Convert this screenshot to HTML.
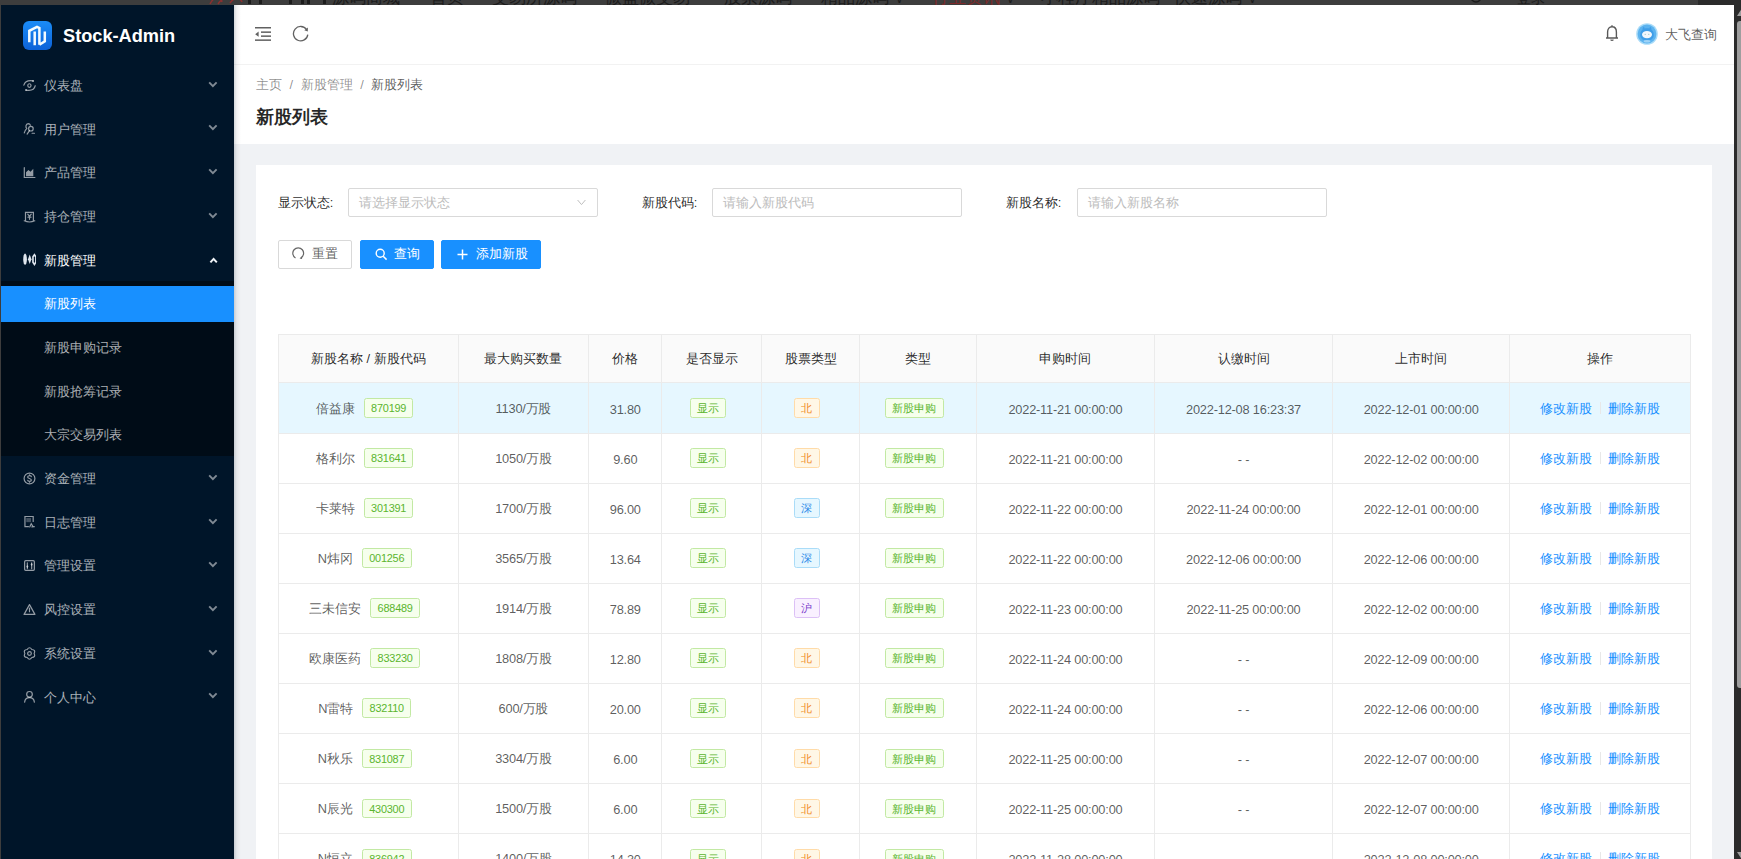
<!DOCTYPE html>
<html><head><meta charset="utf-8">
<style>
*{box-sizing:border-box;margin:0;padding:0}
html,body{width:1741px;height:859px;overflow:hidden;background:#f0f2f5;font-family:"Liberation Sans",sans-serif;font-size:12.8px;color:rgba(0,0,0,.65)}
.abs{position:absolute}
.tb{position:absolute;top:-11.5px;font-size:17px;line-height:17px;color:#1c1c1c;white-space:nowrap}
#topbar{left:0;top:0;width:1741px;height:4.7px;background:#3d3d3d;overflow:hidden;z-index:10}
#ledge{left:0;top:0;width:1.1px;height:859px;background:#3d3d3d;z-index:10}
#scroll{left:1734.2px;top:0;width:6.8px;height:859px;background:#2b2b2b;z-index:10}
#sider{left:0;top:4.7px;width:234px;height:855px;background:#001529;overflow:hidden}
#logo{left:23.2px;top:16.5px;width:28.6px;height:28.6px;border-radius:6px;background:linear-gradient(180deg,#1a8cf7,#0d62d8)}
#logotxt{left:63px;top:9.3px;height:45px;line-height:45px;font-size:18.2px;font-weight:bold;color:#fff}
.mi{position:absolute;left:0;width:234px;height:36.4px;line-height:36.4px;color:rgba(255,255,255,.68);font-size:12.6px;font-weight:500}
.mi svg.ic{display:block}
.mi .tx{position:absolute;left:44.3px;top:0.8px}
.mi .ar{position:absolute;left:208px;top:13.6px}
#sub{left:0;top:276.7px;width:234px;height:174.8px;background:#000c17}
.sel{background:#1890ff;color:#fff}
#header{left:234px;top:4.7px;width:1500.2px;height:59.3px;background:#fff}
#hline{left:234px;top:63.5px;width:1500.2px;height:1px;background:#f2f2f2}
#pghead{left:234px;top:64.5px;width:1500.2px;height:79px;background:#fff}
#shadow{left:234px;top:4.7px;width:7px;height:855px;background:linear-gradient(90deg,rgba(0,21,41,.17),rgba(0,21,41,.05) 40%,rgba(0,21,41,0))}
#card{left:256px;top:165.4px;width:1456px;height:700px;background:#fff}
.lbl{position:absolute;color:rgba(0,0,0,.85);line-height:20px;margin-top:0.6px;font-weight:500}
.inp{position:absolute;width:250px;height:28.6px;border:1px solid #d9d9d9;border-radius:2px;background:#fff}
.ph{position:absolute;left:10px;top:1px;line-height:26.6px;color:#bcbcbc;font-size:12.5px}
.btn{position:absolute;top:239.6px;height:29.3px;border-radius:2px;line-height:25.6px;font-weight:500}
.btnp{background:#1890ff;border:1px solid #1890ff;color:#fff}
.btnd{background:#fff;border:1px solid #d9d9d9;color:rgba(0,0,0,.65)}
.cell{display:flex;align-items:center;justify-content:center;white-space:nowrap}
.tag{display:inline-block;height:19.6px;line-height:19.4px;padding:0 6.2px;border:1px solid;border-radius:2.5px;font-size:10.9px;margin-right:7.3px;font-weight:500}
.nm{margin-right:9px;position:relative;top:1.3px}
.num{letter-spacing:-0.2px;position:relative;top:1.4px}
.tag.num{top:0}
.lnk{color:#1890ff;position:relative;top:1.3px}
.dv{display:inline-block;width:1px;height:12.8px;background:#e8e8e8;margin:0 7.3px}
</style></head><body>
<div id="topbar" class="abs">
  <div class="abs" style="left:1698px;top:0;width:43px;height:5px;background:#2b2b2b"></div>
  <svg class="abs" style="left:208px;top:-6px" width="36" height="11" viewBox="0 0 36 11"><path d="M2 10 C6 2 12 2 14 8 M10 10 C14 4 20 2 24 6 M22 9 C26 3 32 3 34 8" fill="none" stroke="#8a3030" stroke-width="1.5"/></svg>
  <div class="abs" style="left:248px;top:-3px;width:2.5px;height:7px;background:#1c1c1c"></div>
  <div class="abs" style="left:259px;top:-3px;width:2.5px;height:7px;background:#1c1c1c"></div>
  <div class="abs" style="left:289px;top:-3px;width:2.5px;height:7px;background:#1c1c1c"></div>
  <div class="abs" style="left:301px;top:-3px;width:2.5px;height:7px;background:#1c1c1c"></div>
  <div class="abs" style="left:307px;top:-3px;width:2.5px;height:7px;background:#1c1c1c"></div>
  <div class="abs" style="left:323px;top:-3px;width:2.5px;height:7px;background:#1c1c1c"></div>
  <div class="tb" style="left:332px">源码商城</div>
  <div class="tb" style="left:430px">首页</div>
  <div class="tb" style="left:492px">交易所源码</div>
  <div class="tb" style="left:605px">微盘微交易</div>
  <div class="tb" style="left:723.6px">股票源码</div>
  <div class="tb" style="left:821px">精品源码<span style="font-size:12px;margin-left:6px">∨</span></div>
  <div class="tb" style="left:932px;color:#7d2a2a">行业资讯<span style="font-size:12px;margin-left:6px;color:#1c1c1c">∨</span></div>
  <div class="tb" style="left:1041px">小程序精品源码</div>
  <div class="tb" style="left:1173.7px">快速源码<span style="font-size:12px;margin-left:6px">∨</span></div>
  <svg class="abs" style="left:1470px;top:-8px" width="14" height="13" viewBox="0 0 14 13"><circle cx="6" cy="5" r="5" fill="none" stroke="#1c1c1c" stroke-width="1.4"/></svg>
  <div class="tb" style="left:1515.6px;font-size:14.5px;top:-10px">登录</div>
</div>
<div id="ledge" class="abs"></div>
<div id="scroll" class="abs">
  <div class="abs" style="left:2.8px;top:21px;width:4px;height:666.5px;background:#9e9e9e;border-radius:3px 0 0 3px"></div>
  <svg class="abs" style="left:2.5px;top:9px" width="5" height="7"><path d="M0 7 L4.5 0 L4.5 7Z" fill="#9e9e9e"/></svg>
  <svg class="abs" style="left:2.5px;top:852px" width="5" height="7"><path d="M0 0 L4.5 7 L4.5 0Z" fill="#9e9e9e"/></svg>
</div>

<div id="sider" class="abs">
  <div id="logo" class="abs"><svg class="abs" style="left:0;top:0" width="29" height="29" viewBox="0 0 29 29"><path d="M6.3 21.2 V9.8 L14 5.8 L16.4 7 V23.8 M11.7 10.6 V24.2 M16.4 23.8 L21.8 20.3 V10.4" fill="none" stroke="#f4fbff" stroke-width="2.5" stroke-linejoin="miter"/></svg></div>
  <div id="logotxt" class="abs">Stock-Admin</div>
  <div id="sub" class="abs"></div>
<div class="mi" style="top:62.40px"><span style="position:absolute;left:22.5px;top:11.5px"><svg class="ic" width="13" height="13" viewBox="0 0 12 12" style=""><path d="M0.8 5.6 Q2.2 0.6 9.3 1.7" fill="none" stroke="rgba(255,255,255,.58)" stroke-width="1.1" stroke-linecap="round"/><circle cx="9.3" cy="1.8" r=".9" fill="rgba(255,255,255,.58)"/><path d="M11.3 6.2 Q10.2 11.6 2.8 10.3" fill="none" stroke="rgba(255,255,255,.58)" stroke-width="1.1" stroke-linecap="round"/><circle cx="2.8" cy="10.2" r=".9" fill="rgba(255,255,255,.58)"/><ellipse cx="5.9" cy="6.1" rx="1.5" ry="1.7" fill="none" stroke="rgba(255,255,255,.58)" stroke-width="1.1" stroke-linecap="round"/></svg></span><span class="tx">仪表盘</span><svg class="ar" width="10" height="7" viewBox="0 0 10 7"><path d="M1.2 1.4 L4.9 5.2 L8.6 1.4" fill="none" stroke="rgba(255,255,255,.5)" stroke-width="1.9"/></svg></div>
<div class="mi" style="top:106.09px"><span style="position:absolute;left:22.5px;top:11.5px"><svg class="ic" width="13" height="13" viewBox="0 0 12 12" style=""><path d="M1.2 10 C1.8 7.5 3 6.4 3.4 6 C2.2 4.8 2.5 1.6 4.8 1.5 C6 1.5 6.6 2.3 6.8 3" fill="none" stroke="rgba(255,255,255,.58)" stroke-width="1.1" stroke-linecap="round"/><circle cx="7.3" cy="6.2" r="2.1" fill="none" stroke="rgba(255,255,255,.58)" stroke-width="1.1" stroke-linecap="round"/><path d="M6 8 L3.8 11.2 M8.4 10.4 L10.6 10.4" fill="none" stroke="rgba(255,255,255,.58)" stroke-width="1.1" stroke-linecap="round"/></svg></span><span class="tx">用户管理</span><svg class="ar" width="10" height="7" viewBox="0 0 10 7"><path d="M1.2 1.4 L4.9 5.2 L8.6 1.4" fill="none" stroke="rgba(255,255,255,.5)" stroke-width="1.9"/></svg></div>
<div class="mi" style="top:149.78px"><span style="position:absolute;left:22.5px;top:11.5px"><svg class="ic" width="13" height="13" viewBox="0 0 12 12" style=""><path d="M1.2 1.5 V10.6 H11" fill="none" stroke="rgba(255,255,255,.58)" stroke-width="1.1" stroke-linecap="round"/><path d="M2.8 9.5 V5.8 L5 3.6 L7 5.3 L9.5 2.6 V9.5Z" fill="rgba(255,255,255,.58)"/></svg></span><span class="tx">产品管理</span><svg class="ar" width="10" height="7" viewBox="0 0 10 7"><path d="M1.2 1.4 L4.9 5.2 L8.6 1.4" fill="none" stroke="rgba(255,255,255,.5)" stroke-width="1.9"/></svg></div>
<div class="mi" style="top:193.47px"><span style="position:absolute;left:22.5px;top:11.5px"><svg class="ic" width="13" height="13" viewBox="0 0 12 12" style=""><path d="M2.3 9.6 V2.2 H9.6 V9.6 M1.2 10 Q6 12.2 10.8 10" fill="none" stroke="rgba(255,255,255,.58)" stroke-width="1.1" stroke-linecap="round"/><path d="M4.4 3.8 L6 5.8 L7.6 3.8 M6 5.8 V8.6 M4.6 6.6 H7.4" fill="none" stroke="rgba(255,255,255,.58)" stroke-width="1.1" stroke-linecap="round" stroke-width="1"/></svg></span><span class="tx">持仓管理</span><svg class="ar" width="10" height="7" viewBox="0 0 10 7"><path d="M1.2 1.4 L4.9 5.2 L8.6 1.4" fill="none" stroke="rgba(255,255,255,.5)" stroke-width="1.9"/></svg></div>
<div class="mi" style="top:237.16px"><span style="position:absolute;left:22.5px;top:11.5px"><svg class="ic" width="13" height="13" viewBox="0 0 12 12" style=""><ellipse cx="1.9" cy="5.7" rx="1.7" ry="5.2" fill="#dfe6ee"/><path d="M6.2 1.4 L7.8 5.8 L6.2 10.2 L4.6 5.8Z" fill="#dfe6ee"/><path d="M10.55 1.5 L11.9 3.5 V8.5 L10.55 10.6 L9.2 8.5 V3.5Z" fill="none" stroke="#dfe6ee" stroke-width="1.5"/></svg></span><span class="tx" style="color:#fff">新股管理</span><svg class="ar" style="top:15.2px;left:208.5px" width="10" height="7" viewBox="0 0 10 7"><path d="M1.4 5.4 L4.6 1.9 L7.8 5.4" fill="none" stroke="#f0f4f8" stroke-width="2"/></svg></div>
<div class="mi sel" style="top:280.85px"><span class="tx">新股列表</span></div>
<div class="mi" style="top:324.54px"><span class="tx">新股申购记录</span></div>
<div class="mi" style="top:368.23px"><span class="tx">新股抢筹记录</span></div>
<div class="mi" style="top:411.92px"><span class="tx">大宗交易列表</span></div>
<div class="mi" style="top:455.61px"><span style="position:absolute;left:22.5px;top:11.5px"><svg class="ic" width="13" height="13" viewBox="0 0 12 12" style=""><circle cx="6" cy="6" r="5" fill="none" stroke="rgba(255,255,255,.58)" stroke-width="1.1" stroke-linecap="round"/><path d="M7.7 4.3 C7.3 3.1 4.3 3.1 4.3 4.6 C4.3 6.2 7.7 5.7 7.7 7.4 C7.7 9 4.6 9 4.3 7.6 M6 2.6 V3.4 M6 8.6 V9.4" fill="none" stroke="rgba(255,255,255,.58)" stroke-width="1.1" stroke-linecap="round" stroke-width="1"/></svg></span><span class="tx">资金管理</span><svg class="ar" width="10" height="7" viewBox="0 0 10 7"><path d="M1.2 1.4 L4.9 5.2 L8.6 1.4" fill="none" stroke="rgba(255,255,255,.5)" stroke-width="1.9"/></svg></div>
<div class="mi" style="top:499.30px"><span style="position:absolute;left:22.5px;top:11.5px"><svg class="ic" width="13" height="13" viewBox="0 0 12 12" style=""><path d="M5 10.8 H1.8 V1.4 H9.4 V6" fill="none" stroke="rgba(255,255,255,.58)" stroke-width="1.1" stroke-linecap="round"/><rect x="3" y="2.8" width="4.4" height="3.8" fill="rgba(255,255,255,.58)" opacity=".45"/><path d="M6.2 11 L7.6 8 L9.2 10.6 M8.2 11 L10.4 10.8" fill="none" stroke="rgba(255,255,255,.58)" stroke-width="1.1" stroke-linecap="round"/></svg></span><span class="tx">日志管理</span><svg class="ar" width="10" height="7" viewBox="0 0 10 7"><path d="M1.2 1.4 L4.9 5.2 L8.6 1.4" fill="none" stroke="rgba(255,255,255,.5)" stroke-width="1.9"/></svg></div>
<div class="mi" style="top:542.99px"><span style="position:absolute;left:22.5px;top:11.5px"><svg class="ic" width="13" height="13" viewBox="0 0 12 12" style=""><rect x="1.5" y="1.5" width="9" height="9" rx="1" fill="none" stroke="rgba(255,255,255,.58)" stroke-width="1.1" stroke-linecap="round"/><path d="M4 3.5 V9 M8 3.5 V9" fill="none" stroke="rgba(255,255,255,.58)" stroke-width="1.1" stroke-linecap="round" stroke-width=".9"/><path d="M4 5.5 L5 7 L4 8.5 L3 7Z M8 3.6 L9 5 L8 6.4 L7 5Z" fill="rgba(255,255,255,.58)"/></svg></span><span class="tx">管理设置</span><svg class="ar" width="10" height="7" viewBox="0 0 10 7"><path d="M1.2 1.4 L4.9 5.2 L8.6 1.4" fill="none" stroke="rgba(255,255,255,.5)" stroke-width="1.9"/></svg></div>
<div class="mi" style="top:586.68px"><span style="position:absolute;left:22.5px;top:11.5px"><svg class="ic" width="13" height="13" viewBox="0 0 12 12" style=""><path d="M6 1.5 L11 10.5 H1Z" fill="none" stroke="rgba(255,255,255,.58)" stroke-width="1.1" stroke-linejoin="round"/><path d="M6 4.8 V8" fill="none" stroke="rgba(255,255,255,.58)" stroke-width="1.1" stroke-linecap="round"/></svg></span><span class="tx">风控设置</span><svg class="ar" width="10" height="7" viewBox="0 0 10 7"><path d="M1.2 1.4 L4.9 5.2 L8.6 1.4" fill="none" stroke="rgba(255,255,255,.5)" stroke-width="1.9"/></svg></div>
<div class="mi" style="top:630.37px"><span style="position:absolute;left:22.5px;top:11.5px"><svg class="ic" width="13" height="13" viewBox="0 0 12 12" style=""><path d="M3.85 2.28 Q6.00 -0.90 8.15 2.28 Q11.98 2.55 10.30 6.00 Q11.98 9.45 8.15 9.72 Q6.00 12.90 3.85 9.72 Q0.02 9.45 1.70 6.00 Q0.02 2.55 3.85 2.28 Z" fill="none" stroke="rgba(255,255,255,.58)" stroke-width="1.1" stroke-linejoin="round"/><circle cx="6" cy="6" r="1.7" fill="none" stroke="rgba(255,255,255,.58)" stroke-width="1.1" stroke-linecap="round"/></svg></span><span class="tx">系统设置</span><svg class="ar" width="10" height="7" viewBox="0 0 10 7"><path d="M1.2 1.4 L4.9 5.2 L8.6 1.4" fill="none" stroke="rgba(255,255,255,.5)" stroke-width="1.9"/></svg></div>
<div class="mi" style="top:674.06px"><span style="position:absolute;left:22.5px;top:11.5px"><svg class="ic" width="13" height="13" viewBox="0 0 12 12" style=""><circle cx="6" cy="4" r="2.6" fill="none" stroke="rgba(255,255,255,.58)" stroke-width="1.1" stroke-linecap="round"/><path d="M1.5 11.2 C1.8 8.3 3.8 7 6 7 C8.2 7 10.2 8.3 10.5 11.2" fill="none" stroke="rgba(255,255,255,.58)" stroke-width="1.1" stroke-linecap="round"/></svg></span><span class="tx">个人中心</span><svg class="ar" width="10" height="7" viewBox="0 0 10 7"><path d="M1.2 1.4 L4.9 5.2 L8.6 1.4" fill="none" stroke="rgba(255,255,255,.5)" stroke-width="1.9"/></svg></div>
</div>
<div id="header" class="abs"></div>
<div id="hline" class="abs"></div>
<div id="pghead" class="abs"></div>
<div id="card" class="abs"></div>
<div id="shadow" class="abs"></div>

<!-- header content -->
<svg class="abs" style="left:254.8px;top:26.9px" width="16" height="14" viewBox="0 0 16 14">
  <rect x="0" y="0" width="16" height="1.5" fill="#616161"/>
  <rect x="6" y="4.4" width="10" height="1.5" fill="#616161"/>
  <rect x="6" y="8.4" width="10" height="1.5" fill="#616161"/>
  <rect x="0" y="12.4" width="16" height="1.5" fill="#616161"/>
  <path d="M0.2 7.2 L3.6 4.6 V9.8Z" fill="#616161"/>
</svg>
<svg class="abs" style="left:292px;top:23.5px" width="18" height="18" viewBox="0 0 18 18">
  <path d="M14.6 5.6 A7.2 7.2 0 1 0 15.8 10.6" fill="none" stroke="#616161" stroke-width="1.3"/>
  <path d="M15.9 3.6 L15.8 7.4 L12.3 6.2Z" fill="#616161"/>
</svg>
<svg class="abs" style="left:1604.5px;top:23.5px" width="14" height="18" viewBox="0 0 14 18">
  <path d="M7 1.2 V2.6 M2.6 13.8 V8 C2.6 4.6 4.4 2.8 7 2.8 C9.6 2.8 11.4 4.6 11.4 8 V13.8 M1 14 H13 M5.6 15.6 Q7 17.2 8.4 15.6" fill="none" stroke="#595959" stroke-width="1.4"/>
</svg>
<svg class="abs" style="left:1636px;top:23px" width="22" height="22" viewBox="0 0 22 22">
  <circle cx="11" cy="11" r="10.8" fill="#a9dbf8"/>
  <circle cx="11" cy="11" r="9.4" fill="#5cb3ef"/>
  <path d="M4.2 12 C4.2 7.4 7 5.2 11 5.2 C15 5.2 17.8 7.4 17.8 12 C17.8 15.6 15 17.6 11 17.6 C7 17.6 4.2 15.6 4.2 12Z" fill="#3f9ee8"/>
  <path d="M6.2 6.4 L7.6 3.6 L9 5.6Z M15.8 6.4 L14.4 3.6 L13 5.6Z" fill="#3f9ee8"/>
  <ellipse cx="11" cy="11.6" rx="5" ry="3.7" fill="#f1f7fc"/>
  <circle cx="9.2" cy="11.2" r=".5" fill="#7aa"/><circle cx="12.8" cy="11.2" r=".5" fill="#7aa"/>
  <ellipse cx="11" cy="18.2" rx="3.4" ry="1.3" fill="#9fd3f6"/>
</svg>
<div class="abs" style="left:1664.5px;top:24.8px;line-height:20px;color:rgba(0,0,0,.65)">大飞查询</div>

<!-- breadcrumb -->
<div class="abs" style="left:256px;top:74.8px;line-height:20px;color:rgba(0,0,0,.45)">主页<span style="margin:0 7.4px 0 7.6px">/</span>新股管理<span style="margin:0 7.4px 0 7.6px">/</span><span style="color:rgba(0,0,0,.65)">新股列表</span></div>
<div class="abs" style="left:256px;top:104px;line-height:26px;font-size:18.2px;font-weight:bold;color:rgba(0,0,0,.85)">新股列表</div>

<!-- search form -->
<div class="lbl" style="left:277.8px;top:192.5px">显示状态:</div>
<div class="inp" style="left:347.7px;top:188.2px"><span class="ph">请选择显示状态</span>
  <svg class="abs" style="left:228.5px;top:9.5px" width="9" height="7" viewBox="0 0 9 7"><path d="M0.6 1 L4.5 5.6 L8.4 1" fill="none" stroke="#bfbfbf" stroke-width="1"/></svg>
</div>
<div class="lbl" style="left:641.7px;top:192.5px">新股代码:</div>
<div class="inp" style="left:712px;top:188.2px"><span class="ph">请输入新股代码</span></div>
<div class="lbl" style="left:1005.7px;top:192.5px">新股名称:</div>
<div class="inp" style="left:1076.6px;top:188.2px"><span class="ph">请输入新股名称</span></div>

<div class="btn btnd" style="left:277.8px;width:73.8px">
  <svg class="abs" style="left:13.6px;top:6.5px" width="13" height="13" viewBox="0 0 13 13"><path d="M3.5 10.9 A5.4 5.4 0 1 1 8.9 10.9" fill="none" stroke="#666" stroke-width="1.2"/><path d="M7.6 11.6 L9.9 9.2 L10.1 12Z" fill="#666"/></svg>
  <span class="abs" style="left:33.5px;top:0">重置</span>
</div>
<div class="btn btnp" style="left:359.5px;width:74.5px">
  <svg class="abs" style="left:14.2px;top:7.8px" width="13" height="13" viewBox="0 0 13 13"><circle cx="5.2" cy="5.2" r="4" fill="none" stroke="#fff" stroke-width="1.4"/><path d="M8.2 8.2 L11.6 11.6" stroke="#fff" stroke-width="1.5"/></svg>
  <span class="abs" style="left:33.5px;top:0">查询</span>
</div>
<div class="btn btnp" style="left:441.3px;width:100.2px">
  <svg class="abs" style="left:15.2px;top:8.4px" width="11" height="11" viewBox="0 0 11 11"><path d="M5.5 0.5 V10.5 M0.5 5.5 H10.5" stroke="#fff" stroke-width="1.5"/></svg>
  <span class="abs" style="left:33.7px;top:0">添加新股</span>
</div>

<div class="abs" style="left:278.3px;top:334.1px;width:1412.3px;height:48.85px;background:#fafafa;border-radius:3px 3px 0 0"></div>
<div class="abs" style="left:278.3px;top:382.95000000000005px;width:1412.3px;height:50.05px;background:#e6f7ff"></div>
<div class="abs" style="left:278.3px;top:333.60px;width:1412.3px;height:1px;background:#ebebeb"></div>
<div class="abs" style="left:278.3px;top:382.45px;width:1412.3px;height:1px;background:#ebebeb"></div>
<div class="abs" style="left:278.3px;top:432.50px;width:1412.3px;height:1px;background:#ebebeb"></div>
<div class="abs" style="left:278.3px;top:482.55px;width:1412.3px;height:1px;background:#ebebeb"></div>
<div class="abs" style="left:278.3px;top:532.60px;width:1412.3px;height:1px;background:#ebebeb"></div>
<div class="abs" style="left:278.3px;top:582.65px;width:1412.3px;height:1px;background:#ebebeb"></div>
<div class="abs" style="left:278.3px;top:632.70px;width:1412.3px;height:1px;background:#ebebeb"></div>
<div class="abs" style="left:278.3px;top:682.75px;width:1412.3px;height:1px;background:#ebebeb"></div>
<div class="abs" style="left:278.3px;top:732.80px;width:1412.3px;height:1px;background:#ebebeb"></div>
<div class="abs" style="left:278.3px;top:782.85px;width:1412.3px;height:1px;background:#ebebeb"></div>
<div class="abs" style="left:278.3px;top:832.90px;width:1412.3px;height:1px;background:#ebebeb"></div>
<div class="abs" style="left:278.3px;top:882.95px;width:1412.3px;height:1px;background:#ebebeb"></div>
<div class="abs" style="left:277.80px;top:334.1px;width:1px;height:525.9px;background:#ebebeb"></div>
<div class="abs" style="left:457.80px;top:334.1px;width:1px;height:525.9px;background:#ebebeb"></div>
<div class="abs" style="left:588.10px;top:334.1px;width:1px;height:525.9px;background:#ebebeb"></div>
<div class="abs" style="left:661.40px;top:334.1px;width:1px;height:525.9px;background:#ebebeb"></div>
<div class="abs" style="left:761.00px;top:334.1px;width:1px;height:525.9px;background:#ebebeb"></div>
<div class="abs" style="left:859.10px;top:334.1px;width:1px;height:525.9px;background:#ebebeb"></div>
<div class="abs" style="left:975.90px;top:334.1px;width:1px;height:525.9px;background:#ebebeb"></div>
<div class="abs" style="left:1154.00px;top:334.1px;width:1px;height:525.9px;background:#ebebeb"></div>
<div class="abs" style="left:1332.00px;top:334.1px;width:1px;height:525.9px;background:#ebebeb"></div>
<div class="abs" style="left:1509.40px;top:334.1px;width:1px;height:525.9px;background:#ebebeb"></div>
<div class="abs" style="left:1690.10px;top:334.1px;width:1px;height:525.9px;background:#ebebeb"></div>
<div class="abs cell" style="left:278.30px;top:334.10px;width:180.00px;height:48.85px;color:rgba(0,0,0,.85);font-weight:500"><span style="position:relative;top:1.4px">新股名称 / 新股代码</span></div>
<div class="abs cell" style="left:458.30px;top:334.10px;width:130.30px;height:48.85px;color:rgba(0,0,0,.85);font-weight:500"><span style="position:relative;top:1.4px">最大购买数量</span></div>
<div class="abs cell" style="left:588.60px;top:334.10px;width:73.30px;height:48.85px;color:rgba(0,0,0,.85);font-weight:500"><span style="position:relative;top:1.4px">价格</span></div>
<div class="abs cell" style="left:661.90px;top:334.10px;width:99.60px;height:48.85px;color:rgba(0,0,0,.85);font-weight:500"><span style="position:relative;top:1.4px">是否显示</span></div>
<div class="abs cell" style="left:761.50px;top:334.10px;width:98.10px;height:48.85px;color:rgba(0,0,0,.85);font-weight:500"><span style="position:relative;top:1.4px">股票类型</span></div>
<div class="abs cell" style="left:859.60px;top:334.10px;width:116.80px;height:48.85px;color:rgba(0,0,0,.85);font-weight:500"><span style="position:relative;top:1.4px">类型</span></div>
<div class="abs cell" style="left:976.40px;top:334.10px;width:178.10px;height:48.85px;color:rgba(0,0,0,.85);font-weight:500"><span style="position:relative;top:1.4px">申购时间</span></div>
<div class="abs cell" style="left:1154.50px;top:334.10px;width:178.00px;height:48.85px;color:rgba(0,0,0,.85);font-weight:500"><span style="position:relative;top:1.4px">认缴时间</span></div>
<div class="abs cell" style="left:1332.50px;top:334.10px;width:177.40px;height:48.85px;color:rgba(0,0,0,.85);font-weight:500"><span style="position:relative;top:1.4px">上市时间</span></div>
<div class="abs cell" style="left:1509.90px;top:334.10px;width:180.70px;height:48.85px;color:rgba(0,0,0,.85);font-weight:500"><span style="position:relative;top:1.4px">操作</span></div>
<div class="abs cell" style="left:278.30px;top:382.95px;width:180.00px;height:50.05px"><span class="nm">倍益康</span><span class="tag num" style="color:#5ab52e;background:#f6ffed;border-color:#c2e9a3">870199</span></div>
<div class="abs cell" style="left:458.30px;top:382.95px;width:130.30px;height:50.05px"><span class="num">1130/万股</span></div>
<div class="abs cell" style="left:588.60px;top:382.95px;width:73.30px;height:50.05px"><span class="num">31.80</span></div>
<div class="abs cell" style="left:661.90px;top:382.95px;width:99.60px;height:50.05px"><span class="tag" style="color:#5ab52e;background:#f6ffed;border-color:#c2e9a3">显示</span></div>
<div class="abs cell" style="left:761.50px;top:382.95px;width:98.10px;height:50.05px"><span class="tag" style="color:#f08a1e;background:#fff7e6;border-color:#ffdba8">北</span></div>
<div class="abs cell" style="left:859.60px;top:382.95px;width:116.80px;height:50.05px"><span class="tag" style="color:#5ab52e;background:#f6ffed;border-color:#c2e9a3">新股申购</span></div>
<div class="abs cell" style="left:976.40px;top:382.95px;width:178.10px;height:50.05px"><span class="num">2022-11-21 00:00:00</span></div>
<div class="abs cell" style="left:1154.50px;top:382.95px;width:178.00px;height:50.05px"><span class="num">2022-12-08 16:23:37</span></div>
<div class="abs cell" style="left:1332.50px;top:382.95px;width:177.40px;height:50.05px"><span class="num">2022-12-01 00:00:00</span></div>
<div class="abs cell" style="left:1509.90px;top:382.95px;width:180.70px;height:50.05px"><span class="lnk">修改新股</span><span class="dv"></span><span class="lnk">删除新股</span></div>
<div class="abs cell" style="left:278.30px;top:433.00px;width:180.00px;height:50.05px"><span class="nm">格利尔</span><span class="tag num" style="color:#5ab52e;background:#f6ffed;border-color:#c2e9a3">831641</span></div>
<div class="abs cell" style="left:458.30px;top:433.00px;width:130.30px;height:50.05px"><span class="num">1050/万股</span></div>
<div class="abs cell" style="left:588.60px;top:433.00px;width:73.30px;height:50.05px"><span class="num">9.60</span></div>
<div class="abs cell" style="left:661.90px;top:433.00px;width:99.60px;height:50.05px"><span class="tag" style="color:#5ab52e;background:#f6ffed;border-color:#c2e9a3">显示</span></div>
<div class="abs cell" style="left:761.50px;top:433.00px;width:98.10px;height:50.05px"><span class="tag" style="color:#f08a1e;background:#fff7e6;border-color:#ffdba8">北</span></div>
<div class="abs cell" style="left:859.60px;top:433.00px;width:116.80px;height:50.05px"><span class="tag" style="color:#5ab52e;background:#f6ffed;border-color:#c2e9a3">新股申购</span></div>
<div class="abs cell" style="left:976.40px;top:433.00px;width:178.10px;height:50.05px"><span class="num">2022-11-21 00:00:00</span></div>
<div class="abs cell" style="left:1154.50px;top:433.00px;width:178.00px;height:50.05px"><span class="num">- -</span></div>
<div class="abs cell" style="left:1332.50px;top:433.00px;width:177.40px;height:50.05px"><span class="num">2022-12-02 00:00:00</span></div>
<div class="abs cell" style="left:1509.90px;top:433.00px;width:180.70px;height:50.05px"><span class="lnk">修改新股</span><span class="dv"></span><span class="lnk">删除新股</span></div>
<div class="abs cell" style="left:278.30px;top:483.05px;width:180.00px;height:50.05px"><span class="nm">卡莱特</span><span class="tag num" style="color:#5ab52e;background:#f6ffed;border-color:#c2e9a3">301391</span></div>
<div class="abs cell" style="left:458.30px;top:483.05px;width:130.30px;height:50.05px"><span class="num">1700/万股</span></div>
<div class="abs cell" style="left:588.60px;top:483.05px;width:73.30px;height:50.05px"><span class="num">96.00</span></div>
<div class="abs cell" style="left:661.90px;top:483.05px;width:99.60px;height:50.05px"><span class="tag" style="color:#5ab52e;background:#f6ffed;border-color:#c2e9a3">显示</span></div>
<div class="abs cell" style="left:761.50px;top:483.05px;width:98.10px;height:50.05px"><span class="tag" style="color:#2a8ae8;background:#e6f7ff;border-color:#aadcf8">深</span></div>
<div class="abs cell" style="left:859.60px;top:483.05px;width:116.80px;height:50.05px"><span class="tag" style="color:#5ab52e;background:#f6ffed;border-color:#c2e9a3">新股申购</span></div>
<div class="abs cell" style="left:976.40px;top:483.05px;width:178.10px;height:50.05px"><span class="num">2022-11-22 00:00:00</span></div>
<div class="abs cell" style="left:1154.50px;top:483.05px;width:178.00px;height:50.05px"><span class="num">2022-11-24 00:00:00</span></div>
<div class="abs cell" style="left:1332.50px;top:483.05px;width:177.40px;height:50.05px"><span class="num">2022-12-01 00:00:00</span></div>
<div class="abs cell" style="left:1509.90px;top:483.05px;width:180.70px;height:50.05px"><span class="lnk">修改新股</span><span class="dv"></span><span class="lnk">删除新股</span></div>
<div class="abs cell" style="left:278.30px;top:533.10px;width:180.00px;height:50.05px"><span class="nm">N炜冈</span><span class="tag num" style="color:#5ab52e;background:#f6ffed;border-color:#c2e9a3">001256</span></div>
<div class="abs cell" style="left:458.30px;top:533.10px;width:130.30px;height:50.05px"><span class="num">3565/万股</span></div>
<div class="abs cell" style="left:588.60px;top:533.10px;width:73.30px;height:50.05px"><span class="num">13.64</span></div>
<div class="abs cell" style="left:661.90px;top:533.10px;width:99.60px;height:50.05px"><span class="tag" style="color:#5ab52e;background:#f6ffed;border-color:#c2e9a3">显示</span></div>
<div class="abs cell" style="left:761.50px;top:533.10px;width:98.10px;height:50.05px"><span class="tag" style="color:#2a8ae8;background:#e6f7ff;border-color:#aadcf8">深</span></div>
<div class="abs cell" style="left:859.60px;top:533.10px;width:116.80px;height:50.05px"><span class="tag" style="color:#5ab52e;background:#f6ffed;border-color:#c2e9a3">新股申购</span></div>
<div class="abs cell" style="left:976.40px;top:533.10px;width:178.10px;height:50.05px"><span class="num">2022-11-22 00:00:00</span></div>
<div class="abs cell" style="left:1154.50px;top:533.10px;width:178.00px;height:50.05px"><span class="num">2022-12-06 00:00:00</span></div>
<div class="abs cell" style="left:1332.50px;top:533.10px;width:177.40px;height:50.05px"><span class="num">2022-12-06 00:00:00</span></div>
<div class="abs cell" style="left:1509.90px;top:533.10px;width:180.70px;height:50.05px"><span class="lnk">修改新股</span><span class="dv"></span><span class="lnk">删除新股</span></div>
<div class="abs cell" style="left:278.30px;top:583.15px;width:180.00px;height:50.05px"><span class="nm">三未信安</span><span class="tag num" style="color:#5ab52e;background:#f6ffed;border-color:#c2e9a3">688489</span></div>
<div class="abs cell" style="left:458.30px;top:583.15px;width:130.30px;height:50.05px"><span class="num">1914/万股</span></div>
<div class="abs cell" style="left:588.60px;top:583.15px;width:73.30px;height:50.05px"><span class="num">78.89</span></div>
<div class="abs cell" style="left:661.90px;top:583.15px;width:99.60px;height:50.05px"><span class="tag" style="color:#5ab52e;background:#f6ffed;border-color:#c2e9a3">显示</span></div>
<div class="abs cell" style="left:761.50px;top:583.15px;width:98.10px;height:50.05px"><span class="tag" style="color:#7a3dcc;background:#f9f0ff;border-color:#dcc0f6">沪</span></div>
<div class="abs cell" style="left:859.60px;top:583.15px;width:116.80px;height:50.05px"><span class="tag" style="color:#5ab52e;background:#f6ffed;border-color:#c2e9a3">新股申购</span></div>
<div class="abs cell" style="left:976.40px;top:583.15px;width:178.10px;height:50.05px"><span class="num">2022-11-23 00:00:00</span></div>
<div class="abs cell" style="left:1154.50px;top:583.15px;width:178.00px;height:50.05px"><span class="num">2022-11-25 00:00:00</span></div>
<div class="abs cell" style="left:1332.50px;top:583.15px;width:177.40px;height:50.05px"><span class="num">2022-12-02 00:00:00</span></div>
<div class="abs cell" style="left:1509.90px;top:583.15px;width:180.70px;height:50.05px"><span class="lnk">修改新股</span><span class="dv"></span><span class="lnk">删除新股</span></div>
<div class="abs cell" style="left:278.30px;top:633.20px;width:180.00px;height:50.05px"><span class="nm">欧康医药</span><span class="tag num" style="color:#5ab52e;background:#f6ffed;border-color:#c2e9a3">833230</span></div>
<div class="abs cell" style="left:458.30px;top:633.20px;width:130.30px;height:50.05px"><span class="num">1808/万股</span></div>
<div class="abs cell" style="left:588.60px;top:633.20px;width:73.30px;height:50.05px"><span class="num">12.80</span></div>
<div class="abs cell" style="left:661.90px;top:633.20px;width:99.60px;height:50.05px"><span class="tag" style="color:#5ab52e;background:#f6ffed;border-color:#c2e9a3">显示</span></div>
<div class="abs cell" style="left:761.50px;top:633.20px;width:98.10px;height:50.05px"><span class="tag" style="color:#f08a1e;background:#fff7e6;border-color:#ffdba8">北</span></div>
<div class="abs cell" style="left:859.60px;top:633.20px;width:116.80px;height:50.05px"><span class="tag" style="color:#5ab52e;background:#f6ffed;border-color:#c2e9a3">新股申购</span></div>
<div class="abs cell" style="left:976.40px;top:633.20px;width:178.10px;height:50.05px"><span class="num">2022-11-24 00:00:00</span></div>
<div class="abs cell" style="left:1154.50px;top:633.20px;width:178.00px;height:50.05px"><span class="num">- -</span></div>
<div class="abs cell" style="left:1332.50px;top:633.20px;width:177.40px;height:50.05px"><span class="num">2022-12-09 00:00:00</span></div>
<div class="abs cell" style="left:1509.90px;top:633.20px;width:180.70px;height:50.05px"><span class="lnk">修改新股</span><span class="dv"></span><span class="lnk">删除新股</span></div>
<div class="abs cell" style="left:278.30px;top:683.25px;width:180.00px;height:50.05px"><span class="nm">N雷特</span><span class="tag num" style="color:#5ab52e;background:#f6ffed;border-color:#c2e9a3">832110</span></div>
<div class="abs cell" style="left:458.30px;top:683.25px;width:130.30px;height:50.05px"><span class="num">600/万股</span></div>
<div class="abs cell" style="left:588.60px;top:683.25px;width:73.30px;height:50.05px"><span class="num">20.00</span></div>
<div class="abs cell" style="left:661.90px;top:683.25px;width:99.60px;height:50.05px"><span class="tag" style="color:#5ab52e;background:#f6ffed;border-color:#c2e9a3">显示</span></div>
<div class="abs cell" style="left:761.50px;top:683.25px;width:98.10px;height:50.05px"><span class="tag" style="color:#f08a1e;background:#fff7e6;border-color:#ffdba8">北</span></div>
<div class="abs cell" style="left:859.60px;top:683.25px;width:116.80px;height:50.05px"><span class="tag" style="color:#5ab52e;background:#f6ffed;border-color:#c2e9a3">新股申购</span></div>
<div class="abs cell" style="left:976.40px;top:683.25px;width:178.10px;height:50.05px"><span class="num">2022-11-24 00:00:00</span></div>
<div class="abs cell" style="left:1154.50px;top:683.25px;width:178.00px;height:50.05px"><span class="num">- -</span></div>
<div class="abs cell" style="left:1332.50px;top:683.25px;width:177.40px;height:50.05px"><span class="num">2022-12-06 00:00:00</span></div>
<div class="abs cell" style="left:1509.90px;top:683.25px;width:180.70px;height:50.05px"><span class="lnk">修改新股</span><span class="dv"></span><span class="lnk">删除新股</span></div>
<div class="abs cell" style="left:278.30px;top:733.30px;width:180.00px;height:50.05px"><span class="nm">N秋乐</span><span class="tag num" style="color:#5ab52e;background:#f6ffed;border-color:#c2e9a3">831087</span></div>
<div class="abs cell" style="left:458.30px;top:733.30px;width:130.30px;height:50.05px"><span class="num">3304/万股</span></div>
<div class="abs cell" style="left:588.60px;top:733.30px;width:73.30px;height:50.05px"><span class="num">6.00</span></div>
<div class="abs cell" style="left:661.90px;top:733.30px;width:99.60px;height:50.05px"><span class="tag" style="color:#5ab52e;background:#f6ffed;border-color:#c2e9a3">显示</span></div>
<div class="abs cell" style="left:761.50px;top:733.30px;width:98.10px;height:50.05px"><span class="tag" style="color:#f08a1e;background:#fff7e6;border-color:#ffdba8">北</span></div>
<div class="abs cell" style="left:859.60px;top:733.30px;width:116.80px;height:50.05px"><span class="tag" style="color:#5ab52e;background:#f6ffed;border-color:#c2e9a3">新股申购</span></div>
<div class="abs cell" style="left:976.40px;top:733.30px;width:178.10px;height:50.05px"><span class="num">2022-11-25 00:00:00</span></div>
<div class="abs cell" style="left:1154.50px;top:733.30px;width:178.00px;height:50.05px"><span class="num">- -</span></div>
<div class="abs cell" style="left:1332.50px;top:733.30px;width:177.40px;height:50.05px"><span class="num">2022-12-07 00:00:00</span></div>
<div class="abs cell" style="left:1509.90px;top:733.30px;width:180.70px;height:50.05px"><span class="lnk">修改新股</span><span class="dv"></span><span class="lnk">删除新股</span></div>
<div class="abs cell" style="left:278.30px;top:783.35px;width:180.00px;height:50.05px"><span class="nm">N辰光</span><span class="tag num" style="color:#5ab52e;background:#f6ffed;border-color:#c2e9a3">430300</span></div>
<div class="abs cell" style="left:458.30px;top:783.35px;width:130.30px;height:50.05px"><span class="num">1500/万股</span></div>
<div class="abs cell" style="left:588.60px;top:783.35px;width:73.30px;height:50.05px"><span class="num">6.00</span></div>
<div class="abs cell" style="left:661.90px;top:783.35px;width:99.60px;height:50.05px"><span class="tag" style="color:#5ab52e;background:#f6ffed;border-color:#c2e9a3">显示</span></div>
<div class="abs cell" style="left:761.50px;top:783.35px;width:98.10px;height:50.05px"><span class="tag" style="color:#f08a1e;background:#fff7e6;border-color:#ffdba8">北</span></div>
<div class="abs cell" style="left:859.60px;top:783.35px;width:116.80px;height:50.05px"><span class="tag" style="color:#5ab52e;background:#f6ffed;border-color:#c2e9a3">新股申购</span></div>
<div class="abs cell" style="left:976.40px;top:783.35px;width:178.10px;height:50.05px"><span class="num">2022-11-25 00:00:00</span></div>
<div class="abs cell" style="left:1154.50px;top:783.35px;width:178.00px;height:50.05px"><span class="num">- -</span></div>
<div class="abs cell" style="left:1332.50px;top:783.35px;width:177.40px;height:50.05px"><span class="num">2022-12-07 00:00:00</span></div>
<div class="abs cell" style="left:1509.90px;top:783.35px;width:180.70px;height:50.05px"><span class="lnk">修改新股</span><span class="dv"></span><span class="lnk">删除新股</span></div>
<div class="abs cell" style="left:278.30px;top:833.40px;width:180.00px;height:50.05px"><span class="nm">N恒立</span><span class="tag num" style="color:#5ab52e;background:#f6ffed;border-color:#c2e9a3">836942</span></div>
<div class="abs cell" style="left:458.30px;top:833.40px;width:130.30px;height:50.05px"><span class="num">1400/万股</span></div>
<div class="abs cell" style="left:588.60px;top:833.40px;width:73.30px;height:50.05px"><span class="num">14.30</span></div>
<div class="abs cell" style="left:661.90px;top:833.40px;width:99.60px;height:50.05px"><span class="tag" style="color:#5ab52e;background:#f6ffed;border-color:#c2e9a3">显示</span></div>
<div class="abs cell" style="left:761.50px;top:833.40px;width:98.10px;height:50.05px"><span class="tag" style="color:#f08a1e;background:#fff7e6;border-color:#ffdba8">北</span></div>
<div class="abs cell" style="left:859.60px;top:833.40px;width:116.80px;height:50.05px"><span class="tag" style="color:#5ab52e;background:#f6ffed;border-color:#c2e9a3">新股申购</span></div>
<div class="abs cell" style="left:976.40px;top:833.40px;width:178.10px;height:50.05px"><span class="num">2022-11-28 00:00:00</span></div>
<div class="abs cell" style="left:1154.50px;top:833.40px;width:178.00px;height:50.05px"><span class="num">- -</span></div>
<div class="abs cell" style="left:1332.50px;top:833.40px;width:177.40px;height:50.05px"><span class="num">2022-12-08 00:00:00</span></div>
<div class="abs cell" style="left:1509.90px;top:833.40px;width:180.70px;height:50.05px"><span class="lnk">修改新股</span><span class="dv"></span><span class="lnk">删除新股</span></div>
</body></html>
